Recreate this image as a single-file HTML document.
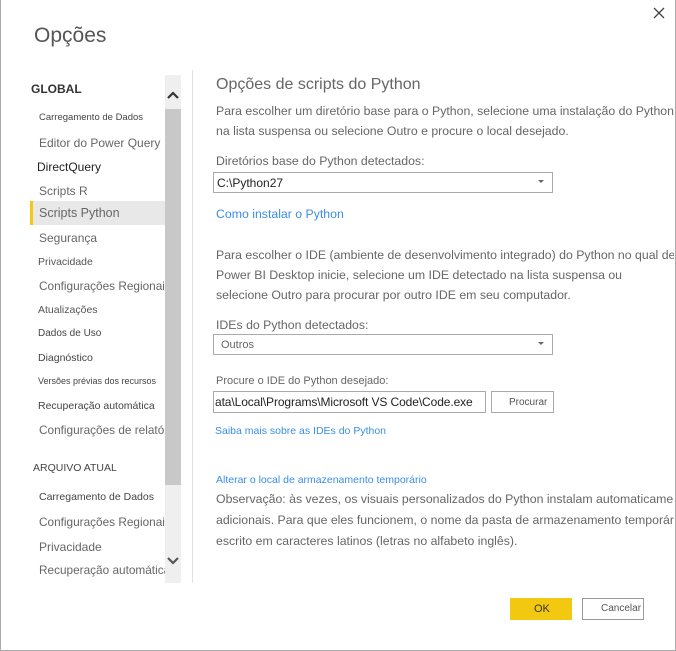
<!DOCTYPE html>
<html><head><meta charset="utf-8"><style>
*{margin:0;padding:0;box-sizing:border-box}
body{width:676px;height:651px;background:#fff;font-family:"Liberation Sans",sans-serif;color:#666;position:relative;overflow:hidden}
.frame{position:absolute;left:0;top:0;width:676px;height:651px;border:1px solid #aaa;border-top:none}
.a{position:absolute;white-space:nowrap;line-height:1}
.clip{position:absolute;left:0;top:0;width:674px;height:650px;overflow:hidden}
.nav{font-size:12px;color:#666}
.sm{font-size:10px;color:#444}
.sel{position:absolute;border:1px solid #aaa;background:#fff}
.arr{position:absolute;right:8px;top:7px;width:0;height:0;border-left:3px solid transparent;border-right:3px solid transparent;border-top:3px solid #666}
.lk{color:#3a8ee6}
.p{font-size:12.3px}
</style></head><body>
<div class="clip">
<div class="a" style="left:34px;top:25px;font-size:21px;color:#555">Opções</div>
<svg style="position:absolute;left:653px;top:7px" width="12" height="12"><path d="M1 1 L11 11 M11 1 L1 11" stroke="#444" stroke-width="1.3"/></svg>

<div class="a" style="left:31px;top:83px;font-size:12px;font-weight:bold;color:#333">GLOBAL</div>
<div class="a sm" style="left:39px;top:113px;font-size:9.5px">Carregamento de Dados</div>
<div class="a nav" style="left:39px;top:137px">Editor do Power Query</div>
<div class="a nav" style="left:37px;top:161px;color:#222">DirectQuery</div>
<div class="a nav" style="left:39px;top:185px">Scripts R</div>
<div style="position:absolute;left:30px;top:201px;width:135px;height:24px;background:#e8e8e8;border-left:3px solid #f2c811"></div>
<div class="a nav" style="left:39px;top:207px;font-size:12.5px">Scripts Python</div>
<div class="a nav" style="left:39px;top:232px">Segurança</div>
<div class="a sm" style="left:38px;top:257px;font-size:10.5px;color:#555">Privacidade</div>
<div class="a nav" style="left:39px;top:281px;font-size:11.8px">Configurações Regionais</div>
<div class="a sm" style="left:38px;top:305px;font-size:10.5px;color:#555">Atualizações</div>
<div class="a sm" style="left:38px;top:329px">Dados de Uso</div>
<div class="a sm" style="left:38px;top:353px;font-size:10.5px">Diagnóstico</div>
<div class="a sm" style="left:38px;top:377px;font-size:9px">Versões prévias dos recursos</div>
<div class="a sm" style="left:38px;top:401px;font-size:10.5px">Recuperação automática</div>
<div class="a nav" style="left:39px;top:425px;font-size:11.8px">Configurações de relatório</div>
<div class="a sm" style="left:33px;top:463px;font-size:10.5px">ARQUIVO ATUAL</div>
<div class="a sm" style="left:39px;top:492px;font-size:10.5px">Carregamento de Dados</div>
<div class="a nav" style="left:39px;top:517px;font-size:11.8px">Configurações Regionais</div>
<div class="a nav" style="left:39px;top:541px">Privacidade</div>
<div class="a nav" style="left:39px;top:565px;font-size:11.8px">Recuperação automática</div>

<div style="position:absolute;left:165px;top:75px;width:16px;height:508px;background:#efefef"></div>
<div style="position:absolute;left:165px;top:109px;width:16px;height:376px;background:#c8c8c8"></div>
<svg style="position:absolute;left:166px;top:90px" width="14" height="10"><path d="M2 8 L7 3 L12 8" stroke="#333" stroke-width="2.2" fill="none"/></svg>
<svg style="position:absolute;left:166px;top:556px" width="14" height="10"><path d="M2 2 L7 7 L12 2" stroke="#555" stroke-width="2.2" fill="none"/></svg>
<div style="position:absolute;left:192px;top:70px;width:1px;height:513px;background:#e0e0e0"></div>

<div class="a" style="left:216px;top:77px;font-size:16px;color:#666">Opções de scripts do Python</div>
<div class="a p" style="left:216px;top:105px">Para escolher um diretório base para o Python, selecione uma instalação do Python</div>
<div class="a p" style="left:216px;top:125px">na lista suspensa ou selecione Outro e procure o local desejado.</div>
<div class="a p" style="left:216px;top:155px">Diretórios base do Python detectados:</div>
<div class="sel" style="left:213px;top:172px;width:340px;height:21px"><div class="a" style="left:3px;top:4px;font-size:12px;color:#222">C:\Python27</div><div class="arr"></div></div>
<div class="a lk p" style="left:216px;top:208px">Como instalar o Python</div>
<div class="a p" style="left:216px;top:249px">Para escolher o IDE (ambiente de desenvolvimento integrado) do Python no qual deseja</div>
<div class="a p" style="left:216px;top:269px">Power BI Desktop inicie, selecione um IDE detectado na lista suspensa ou</div>
<div class="a p" style="left:216px;top:289px">selecione Outro para procurar por outro IDE em seu computador.</div>
<div class="a p" style="left:216px;top:319px">IDEs do Python detectados:</div>
<div class="sel" style="left:213px;top:334px;width:340px;height:21px"><div class="a" style="left:7px;top:5px;font-size:11px;color:#666">Outros</div><div class="arr"></div></div>
<div class="a" style="left:216px;top:376px;font-size:11px">Procure o IDE do Python desejado:</div>
<div class="sel" style="left:213px;top:391px;width:273px;height:22px;overflow:hidden"><div class="a" style="left:1px;top:4px;font-size:12px;color:#222;letter-spacing:-.1px">ata\Local\Programs\Microsoft VS Code\Code.exe</div></div>
<div class="sel" style="left:491px;top:391px;width:63px;height:22px"><div class="a" style="left:17px;top:6px;font-size:10px;color:#555">Procurar</div></div>
<div class="a lk" style="left:215px;top:426px;font-size:10.5px">Saiba mais sobre as IDEs do Python</div>
<div class="a lk" style="left:216px;top:475px;font-size:10.5px">Alterar o local de armazenamento temporário</div>
<div class="a p" style="left:216px;top:493px">Observação: às vezes, os visuais personalizados do Python instalam automaticamente</div>
<div class="a p" style="left:216px;top:514px">adicionais. Para que eles funcionem, o nome da pasta de armazenamento temporário</div>
<div class="a p" style="left:216px;top:535px">escrito em caracteres latinos (letras no alfabeto inglês).</div>

<div style="position:absolute;left:510px;top:598px;width:62px;height:22px;background:#f2c811"></div>
<div class="a" style="left:534px;top:604px;font-size:11px;color:#333">OK</div>
<div class="sel" style="left:582px;top:598px;width:62px;height:22px;border-color:#999"><div class="a" style="left:18px;top:5px;font-size:10px;color:#555">Cancelar</div></div>
</div>
<div class="frame"></div>
</body></html>
